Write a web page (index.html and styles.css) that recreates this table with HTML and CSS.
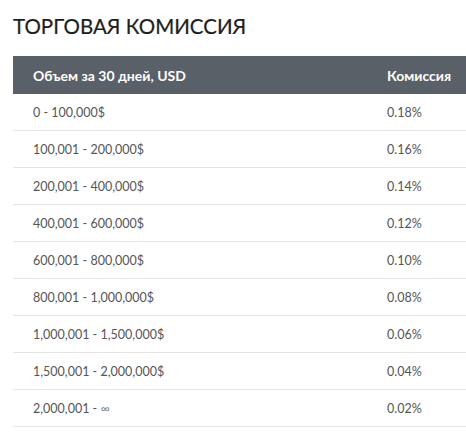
FILE: index.html
```html
<!DOCTYPE html>
<html lang="ru">
<head>
<meta charset="utf-8">
<link rel="stylesheet" href="styles.css">
</head>
<body>
<div class="page">
  <h1 class="title">ТОРГОВАЯ КОМИССИЯ</h1>
  <div class="table">
    <div class="row head"><div class="c1">Объем за 30 дней, USD</div><div class="c2">Комиссия</div></div>
    <div class="row"><div class="c1">0 - 100,000$</div><div class="c2">0.18%</div></div>
    <div class="row"><div class="c1">100,001 - 200,000$</div><div class="c2">0.16%</div></div>
    <div class="row"><div class="c1">200,001 - 400,000$</div><div class="c2">0.14%</div></div>
    <div class="row"><div class="c1">400,001 - 600,000$</div><div class="c2">0.12%</div></div>
    <div class="row"><div class="c1">600,001 - 800,000$</div><div class="c2">0.10%</div></div>
    <div class="row"><div class="c1">800,001 - 1,000,000$</div><div class="c2">0.08%</div></div>
    <div class="row"><div class="c1">1,000,001 - 1,500,000$</div><div class="c2">0.06%</div></div>
    <div class="row"><div class="c1">1,500,001 - 2,000,000$</div><div class="c2">0.04%</div></div>
    <div class="row"><div class="c1">2,000,001 - <span class="inf">∞</span></div><div class="c2">0.02%</div></div>
  </div>
</div>
</body>
</html>
```
FILE: styles.css
```css
html, body { margin: 0; padding: 0; background: #fff; }
body { font-family: Lato, "Noto Sans", sans-serif; }
.page { padding: 13px 0 0 13px; }
.title {
  margin: 0;
  font-size: 20.5px;
  font-weight: 400;
  color: #1e1e1e;
  line-height: 26px;
  -webkit-text-stroke: 0.2px #1e1e1e;
}
.table { margin-top: 17px; width: 453px; }
.row {
  display: grid;
  grid-template-columns: 1fr 79px;
  align-items: center;
  height: 36px;
  border-bottom: 1px solid #e6e6e6;
  font-size: 12.5px;
  color: #555;
}
.row .c1 { padding-left: 20px; }
.head {
  background: #596067;
  color: #fff;
  font-weight: 700;
  font-size: 14px;
  height: 38px;
  border-bottom: none;
}
.inf { color: #888; }
```
